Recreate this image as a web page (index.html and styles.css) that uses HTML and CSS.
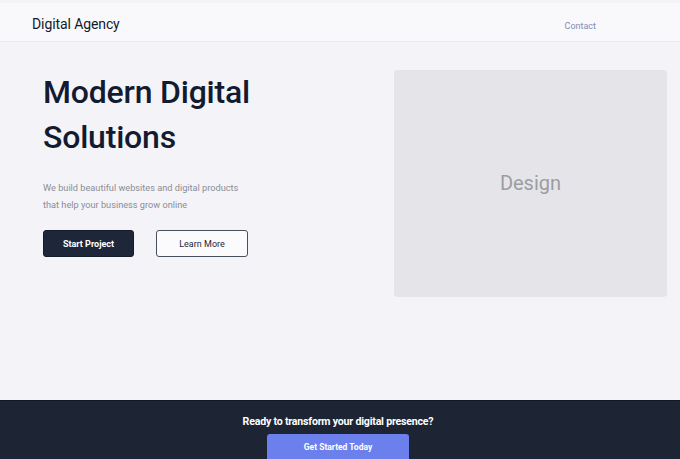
FILE: index.html
```html
<!DOCTYPE html>
<html>
<head>
<meta charset="utf-8">
<link rel="stylesheet" href="styles.css">
</head>
<body>
<header class="topbar">
  <div class="brand">Digital Agency</div>
  <nav class="nav"><a class="nav-link" href="#">Contact</a></nav>
</header>
<main class="hero">
  <section class="hero-text">
    <h1 class="title">Modern Digital<br>Solutions</h1>
    <p class="lead">We build beautiful websites and digital products<br>that help your business grow online</p>
    <div class="actions">
      <a class="btn btn-dark" href="#">Start Project</a>
      <a class="btn btn-outline" href="#">Learn More</a>
    </div>
  </section>
  <section class="hero-media">
    <div class="media-box">Design</div>
  </section>
</main>
<footer class="cta">
  <h2 class="cta-title">Ready to transform your digital presence?</h2>
  <a class="btn-cta" href="#">Get Started Today</a>
</footer>
</body>
</html>
```
FILE: styles.css
```css
* { box-sizing: border-box; }
html, body { margin: 0; padding: 0; }
body {
  width: 680px;
  height: 459px;
  overflow: hidden;
  background: #f4f4f8;
  font-family: Roboto, "Liberation Sans", Arial, sans-serif;
  color: #111a2e;
}
.topbar {
  margin-top: 3px;
  height: 39px;
  background: #f9f9fb;
  border-bottom: 1px solid #e9e9ee;
  display: flex;
  align-items: center;
  justify-content: space-between;
  padding: 3px 84px 0 32px;
}
.brand {
  font-size: 14px;
  color: #111a2e;
  letter-spacing: -0.1px;
}
.nav-link {
  font-size: 9px;
  color: #7f8cb6;
  text-decoration: none;
}
.hero {
  height: 358px;
  display: flex;
  padding: 28px 13px 0 43px;
}
.hero-text {
  flex: 1;
}
.title {
  margin: 0;
  font-size: 32px;
  font-weight: 500;
  line-height: 45px;
  color: #131b30;
  letter-spacing: -0.2px;
}
.lead {
  margin: 19px 0 0;
  font-size: 9.2px;
  line-height: 17px;
  color: #8a8d96;
}
.actions {
  margin-top: 17px;
  display: flex;
  gap: 22px;
}
.btn {
  height: 27px;
  border-radius: 3px;
  display: flex;
  align-items: center;
  justify-content: center;
  font-size: 9px;
  text-decoration: none;
}
.btn-dark {
  width: 91px;
  background: #1e2639;
  color: #ffffff;
  font-weight: 700;
  border: 1px solid #151b29;
}
.btn-outline {
  width: 92px;
  background: #fbfbfd;
  color: #1e2639;
  border: 1.5px solid #4a4f5c;
}
.hero-media {
  width: 273px;
}
.media-box {
  height: 227px;
  background: #e5e5e9;
  border-radius: 4px;
  display: flex;
  align-items: center;
  justify-content: center;
  font-size: 20px;
  color: #9c9ca3;
  padding-bottom: 2px;
}
.cta {
  height: 59px;
  background: #1d2434;
  border-top: 1px solid #111827;
  display: flex;
  flex-direction: column;
  align-items: center;
  padding: 14px 4px 0 0;
}
.cta-title {
  margin: 0;
  font-size: 10.6px;
  font-weight: 700;
  color: #ffffff;
  letter-spacing: -0.2px;
}
.btn-cta {
  margin-top: 6px;
  width: 142px;
  height: 30px;
  border-radius: 3px 3px 0 0;
  background: #6b80ec;
  color: #ffffff;
  font-size: 8.5px;
  font-weight: 700;
  text-decoration: none;
  display: flex;
  align-items: center;
  justify-content: center;
}
```
